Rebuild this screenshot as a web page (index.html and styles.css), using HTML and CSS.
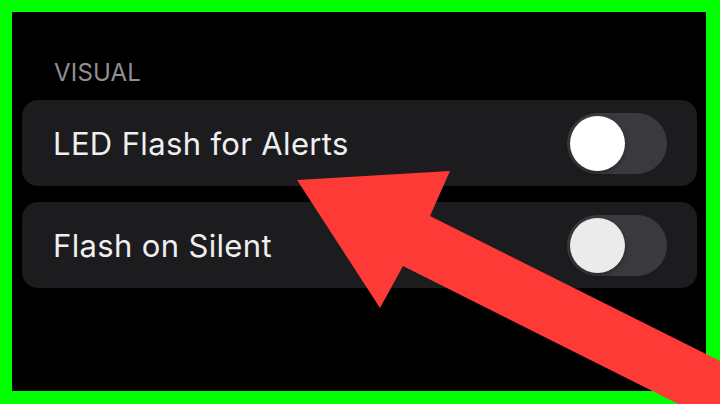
FILE: index.html
```html
<!DOCTYPE html>
<html lang="en">
<head>
<meta charset="utf-8">
<title>Visual</title>
<link rel="stylesheet" href="styles.css">
</head>
<body>
<div class="frame">
  <div class="screen">
    <div class="section-title">VISUAL</div>
    <div class="group">
      <div class="row">
        <span class="label">LED Flash for Alerts</span>
        <span class="switch"><span class="knob"></span></span>
      </div>
      <div class="row">
        <span class="label">Flash on Silent</span>
        <span class="switch"><span class="knob knob-dim"></span></span>
      </div>
    </div>
  </div>
  <svg class="arrow" viewBox="0 0 720 404" width="720" height="404" aria-hidden="true">
    <polygon points="297,180 450,171 430,216 800,401 800,465 403,266 380,308" fill="#fe3a37"/>
  </svg>
</div>
</body>
</html>
```
FILE: styles.css
```css
html, body {
  margin: 0;
  padding: 0;
}

body {
  width: 720px;
  height: 404px;
  overflow: hidden;
  font-family: Inter, "Liberation Sans", sans-serif;
}

.frame {
  position: relative;
  width: 720px;
  height: 404px;
  box-sizing: border-box;
  padding: 12px 14px 13px 12px;
  background: #00ff00;
  overflow: hidden;
}

.screen {
  height: 100%;
  box-sizing: border-box;
  padding: 47px 9px 0 10px;
  background: #000;
}

.section-title {
  padding-left: 32px;
  height: 28px;
  line-height: 28px;
  font-size: 24px;
  color: #8f8f94;
  letter-spacing: 0.2px;
}

.group {
  margin-top: 13px;
  display: flex;
  flex-direction: column;
  gap: 16px;
}

.row {
  height: 86px;
  display: flex;
  align-items: center;
  justify-content: space-between;
  padding: 0 30px 0 31px;
  border-radius: 16px;
  background: #1c1c1e;
}

.label {
  font-size: 31px;
  color: #efeff1;
  letter-spacing: 0.35px;
}

.switch {
  width: 100px;
  height: 61px;
  border-radius: 31px;
  background: #3a3a3e;
  display: flex;
  align-items: center;
  padding-left: 3px;
  box-sizing: border-box;
}

.knob {
  width: 55px;
  height: 55px;
  border-radius: 50%;
  background: #ffffff;
  box-shadow: 0 2px 4px rgba(0, 0, 0, 0.35);
}

.knob-dim {
  background: #ebebeb;
}

.arrow {
  position: absolute;
  left: 0;
  top: 0;
}
```
